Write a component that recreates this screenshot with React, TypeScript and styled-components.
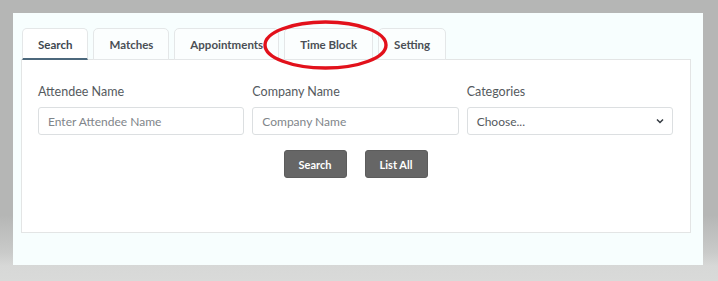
import styled, { createGlobalStyle } from 'styled-components';

const GlobalStyle = createGlobalStyle`
  html, body {
    margin: 0;
    padding: 0;
  }
  body {
    font-family: Lato, "Open Sans", Arial, sans-serif;
  }
`;

const TABS = ['Search', 'Matches', 'Appointments', 'Time Block', 'Setting'];

const FIELDS = [
  { id: 'attendee', label: 'Attendee Name', placeholder: 'Enter Attendee Name' },
  { id: 'company', label: 'Company Name', placeholder: 'Company Name' },
];

function Chevron() {
  return (
    <svg width="8" height="6" viewBox="0 0 8 6" fill="none">
      <path d="M1 1.5l3 3 3-3" stroke="#343a40" strokeWidth="1.5" />
    </svg>
  );
}

export default function App() {
  return (
    <Screen>
      <GlobalStyle />
      <Panel>
        <TabList>
          {TABS.map((tab, i) => (
            <Tab key={tab} $active={i === 0}>
              {tab}
            </Tab>
          ))}
        </TabList>
        <Card>
          <FieldRow>
            {FIELDS.map((f) => (
              <Field key={f.id}>
                <Label htmlFor={f.id}>{f.label}</Label>
                <Input id={f.id} placeholder={f.placeholder} />
              </Field>
            ))}
            <Field>
              <Label htmlFor="categories">Categories</Label>
              <SelectBox id="categories">
                <span>Choose...</span>
                <Chevron />
              </SelectBox>
            </Field>
          </FieldRow>
          <Actions>
            <Button>Search</Button>
            <Button>List All</Button>
          </Actions>
        </Card>
        <Highlight width="127" height="52" viewBox="0 0 127 52">
          <ellipse cx="63.5" cy="26" rx="60.5" ry="23" fill="none" stroke="#e2111b" strokeWidth="3.4" />
        </Highlight>
      </Panel>
    </Screen>
  );
}

const Screen = styled.div`
  width: 718px;
  height: 281px;
  padding: 13px 15px 0 13px;
  box-sizing: border-box;
  background: linear-gradient(
    to bottom,
    #b5b6b5 0,
    #b5b6b5 215px,
    #c9cac9 252px,
    #d7d8d7 266px,
    #d9dad9 281px
  );
  overflow: hidden;
`;

const Panel = styled.div`
  position: relative;
  height: 252px;
  padding: 15px 12px 0 8px;
  box-sizing: border-box;
  background: #f7fefe;
`;

const TabList = styled.ul`
  display: flex;
  gap: 5px;
  margin: 0;
  padding: 0 0 0 1px;
  list-style: none;
  position: relative;
  z-index: 1;
`;

const Tab = styled.li<{ $active?: boolean }>`
  height: 32px;
  padding: 1px 15px 0;
  display: flex;
  align-items: center;
  box-sizing: border-box;
  font-size: 11.5px;
  font-weight: 700;
  color: ${(p) => (p.$active ? '#3d4750' : '#4a4f55')};
  background: ${(p) => (p.$active ? '#ffffff' : '#fbfefe')};
  border: 1px solid #e4e7e8;
  border-bottom: ${(p) => (p.$active ? '2px solid #4c687c' : '1px solid #e4e7e8')};
  border-radius: 5px 5px 0 0;
`;

const Card = styled.div`
  width: 670px;
  height: 174px;
  margin-top: -1px;
  padding: 23px 17px 0 16px;
  box-sizing: border-box;
  background: #ffffff;
  border: 1px solid #e3e5e5;
`;

const FieldRow = styled.div`
  display: grid;
  grid-template-columns: repeat(3, 1fr);
  gap: 8px;
`;

const Field = styled.div`
  display: flex;
  flex-direction: column;
`;

const Label = styled.label`
  font-size: 12.5px;
  color: #555a5e;
  line-height: 18px;
  margin-bottom: 6px;
`;

const Input = styled.input`
  height: 28px;
  padding: 0 9px;
  box-sizing: border-box;
  border: 1px solid #dcdfe1;
  border-radius: 3px;
  font-family: inherit;
  font-size: 12px;
  color: #333;
  background: #fff;

  &::placeholder {
    color: #7f858a;
  }
`;

const SelectBox = styled.div`
  height: 28px;
  padding: 0 8px 0 9px;
  box-sizing: border-box;
  display: flex;
  align-items: center;
  justify-content: space-between;
  border: 1px solid #dcdfe1;
  border-radius: 3px;
  font-size: 12px;
  color: #555a5e;
  background: #fff;
`;

const Actions = styled.div`
  display: flex;
  justify-content: center;
  gap: 18px;
  margin-top: 15px;
`;

const Button = styled.button`
  width: 63px;
  height: 28px;
  border: 1px solid #5c5c5c;
  border-radius: 3px;
  background: #666666;
  color: #ffffff;
  font-family: inherit;
  font-size: 11px;
  font-weight: 700;
  padding: 0;
`;

const Highlight = styled.svg`
  position: absolute;
  left: 249px;
  top: 6px;
  z-index: 2;
  pointer-events: none;
`;
